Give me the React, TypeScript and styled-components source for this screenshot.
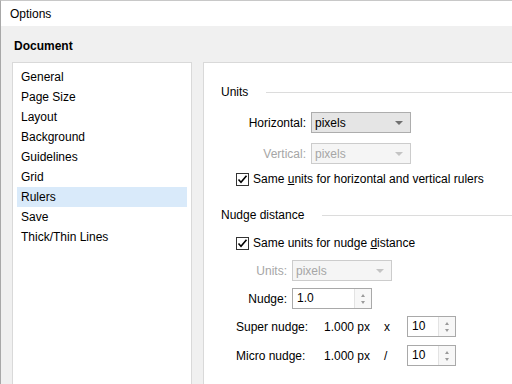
import React from "react";
import styled, { createGlobalStyle } from "styled-components";

const GlobalStyle = createGlobalStyle`
  body {
    margin: 0;
    overflow: hidden;
    font-family: "Liberation Sans", Arial, sans-serif;
    font-size: 12px;
    color: #000;
  }
`;

const Window = styled.div`
  width: 512px;
  height: 384px;
  overflow: hidden;
  box-sizing: border-box;
  border-left: 1px solid #a8a8a8;
  border-top: 1px solid #c8c8c8;
  background: #f0f0f0;
  display: flex;
  flex-direction: column;
`;

const TitleBar = styled.div`
  height: 25px;
  background: #fff;
  display: flex;
  align-items: center;
  padding-left: 9px;
  flex-shrink: 0;
`;

const Body = styled.div`
  padding-left: 11px;
  flex: 1;
  display: flex;
  flex-direction: column;
`;

const Heading = styled.div`
  font-weight: bold;
  height: 16px;
  line-height: 16px;
  padding: 12px 0 0 2px;
  margin-bottom: 8px;
`;

const Content = styled.div`
  display: flex;
  gap: 11px;
  height: 340px;
`;

const List = styled.div`
  width: 180px;
  box-sizing: border-box;
  border: 1px solid #d9d9d9;
  background: #fff;
  padding: 4px;
  flex-shrink: 0;
`;

const Item = styled.div<{ $selected?: boolean }>`
  height: 20px;
  line-height: 20px;
  padding-left: 4px;
  background: ${(p) => (p.$selected ? "#d9eafa" : "transparent")};
`;

const Panel = styled.div`
  width: 330px;
  flex-shrink: 0;
  box-sizing: border-box;
  border: 1px solid #d9d9d9;
  background: #fff;
  padding: 21px 0 0 17px;
  display: flex;
  flex-direction: column;
`;

const GroupHeader = styled.div<{ $top?: number }>`
  display: flex;
  align-items: center;
  height: 16px;
  margin-top: ${(p) => p.$top ?? 0}px;
`;

const Rule = styled.div`
  flex: 1;
  height: 1px;
  background: #dcdcdc;
  margin-left: 18px;
`;

const Row = styled.div<{ $top: number; $indent?: number }>`
  display: flex;
  align-items: center;
  height: 21px;
  margin-top: ${(p) => p.$top}px;
  padding-left: ${(p) => p.$indent ?? 0}px;
`;

const Label = styled.span<{ $width: number; $disabled?: boolean }>`
  width: ${(p) => p.$width}px;
  text-align: right;
  margin-right: 5px;
  color: ${(p) => (p.$disabled ? "#a6a6a6" : "#000")};
`;

const Combo = styled.div<{ $disabled?: boolean }>`
  width: 100px;
  height: 21px;
  box-sizing: border-box;
  border: 1px solid ${(p) => (p.$disabled ? "#cccccc" : "#adadad")};
  background: ${(p) => (p.$disabled ? "#f5f5f5" : "#e5e5e5")};
  color: ${(p) => (p.$disabled ? "#a6a6a6" : "#000")};
  display: flex;
  align-items: center;
  justify-content: space-between;
  padding: 0 7px 0 3px;
`;

const Arrow = styled.span<{ $disabled?: boolean }>`
  width: 0;
  height: 0;
  border-left: 4px solid transparent;
  border-right: 4px solid transparent;
  border-top: 4px solid ${(p) => (p.$disabled ? "#c4c4c4" : "#707070")};
`;

const CheckRow = styled.label<{ $top: number }>`
  display: flex;
  align-items: center;
  height: 16px;
  margin-top: ${(p) => p.$top}px;
  padding-left: 15px;
  gap: 4px;
`;

const Box = styled.span`
  width: 13px;
  height: 13px;
  box-sizing: border-box;
  border: 1px solid #333;
  background: #fff;
  display: flex;
  align-items: center;
  justify-content: center;
`;

const Spin = styled.div<{ $width: number }>`
  width: ${(p) => p.$width}px;
  height: 21px;
  box-sizing: border-box;
  border: 1px solid #a9a9a9;
  background: #fff;
  display: flex;
`;

const SpinText = styled.span`
  flex: 1;
  padding-left: 4px;
  line-height: 19px;
`;

const SpinButtons = styled.div`
  width: 17px;
  border-left: 1px solid #e3e3e3;
  background: #f7f7f7;
  display: flex;
  flex-direction: column;
  align-items: center;
  justify-content: space-between;
  padding: 5px 0 4px;
  box-sizing: border-box;
`;

const Tri = styled.span<{ $up?: boolean }>`
  width: 0;
  height: 0;
  border-left: 2.5px solid transparent;
  border-right: 2.5px solid transparent;
  ${(p) =>
    p.$up ? "border-bottom: 3px solid #9a9a9a;" : "border-top: 3px solid #9a9a9a;"}
`;

const Cell = styled.span<{ $width: number }>`
  width: ${(p) => p.$width}px;
`;

const Check = () => (
  <Box>
    <svg width="11" height="11" viewBox="0 0 11 11">
      <path d="M1.5 5.5 L4 8.2 L9.5 1.8" fill="none" stroke="#000" strokeWidth="1.6" />
    </svg>
  </Box>
);

const SpinBox: React.FC<{ value: string; width: number }> = ({ value, width }) => (
  <Spin $width={width}>
    <SpinText>{value}</SpinText>
    <SpinButtons>
      <Tri $up />
      <Tri />
    </SpinButtons>
  </Spin>
);

const pages = [
  "General",
  "Page Size",
  "Layout",
  "Background",
  "Guidelines",
  "Grid",
  "Rulers",
  "Save",
  "Thick/Thin Lines",
];

export default function App() {
  return (
    <>
      <GlobalStyle />
      <Window>
        <TitleBar>Options</TitleBar>
        <Body>
          <Heading>Document</Heading>
          <Content>
            <List>
              {pages.map((p) => (
                <Item key={p} $selected={p === "Rulers"}>
                  {p}
                </Item>
              ))}
            </List>
            <Panel>
              <GroupHeader>
                Units
                <Rule />
              </GroupHeader>
              <Row $top={12}>
                <Label $width={85}>Horizontal:</Label>
                <Combo>
                  pixels
                  <Arrow />
                </Combo>
              </Row>
              <Row $top={10}>
                <Label $width={85} $disabled>
                  Vertical:
                </Label>
                <Combo $disabled>
                  pixels
                  <Arrow $disabled />
                </Combo>
              </Row>
              <CheckRow $top={7}>
                <Check />
                <span>
                  Same <u>u</u>nits for horizontal and vertical rulers
                </span>
              </CheckRow>
              <GroupHeader $top={20}>
                Nudge distance
                <Rule />
              </GroupHeader>
              <CheckRow $top={12}>
                <Check />
                <span>
                  Same units for nudge <u>d</u>istance
                </span>
              </CheckRow>
              <Row $top={9}>
                <Label $width={66} $disabled>
                  Units:
                </Label>
                <Combo $disabled>
                  pixels
                  <Arrow $disabled />
                </Combo>
              </Row>
              <Row $top={7}>
                <Label $width={66}>Nudge:</Label>
                <SpinBox value="1.0" width={80} />
              </Row>
              <Row $top={7} $indent={15}>
                <Cell $width={88}>Super nudge:</Cell>
                <Cell $width={60}>1.000 px</Cell>
                <Cell $width={23}>x</Cell>
                <SpinBox value="10" width={49} />
              </Row>
              <Row $top={8} $indent={15}>
                <Cell $width={88}>Micro nudge:</Cell>
                <Cell $width={60}>1.000 px</Cell>
                <Cell $width={23}>/</Cell>
                <SpinBox value="10" width={49} />
              </Row>
            </Panel>
          </Content>
        </Body>
      </Window>
    </>
  );
}
